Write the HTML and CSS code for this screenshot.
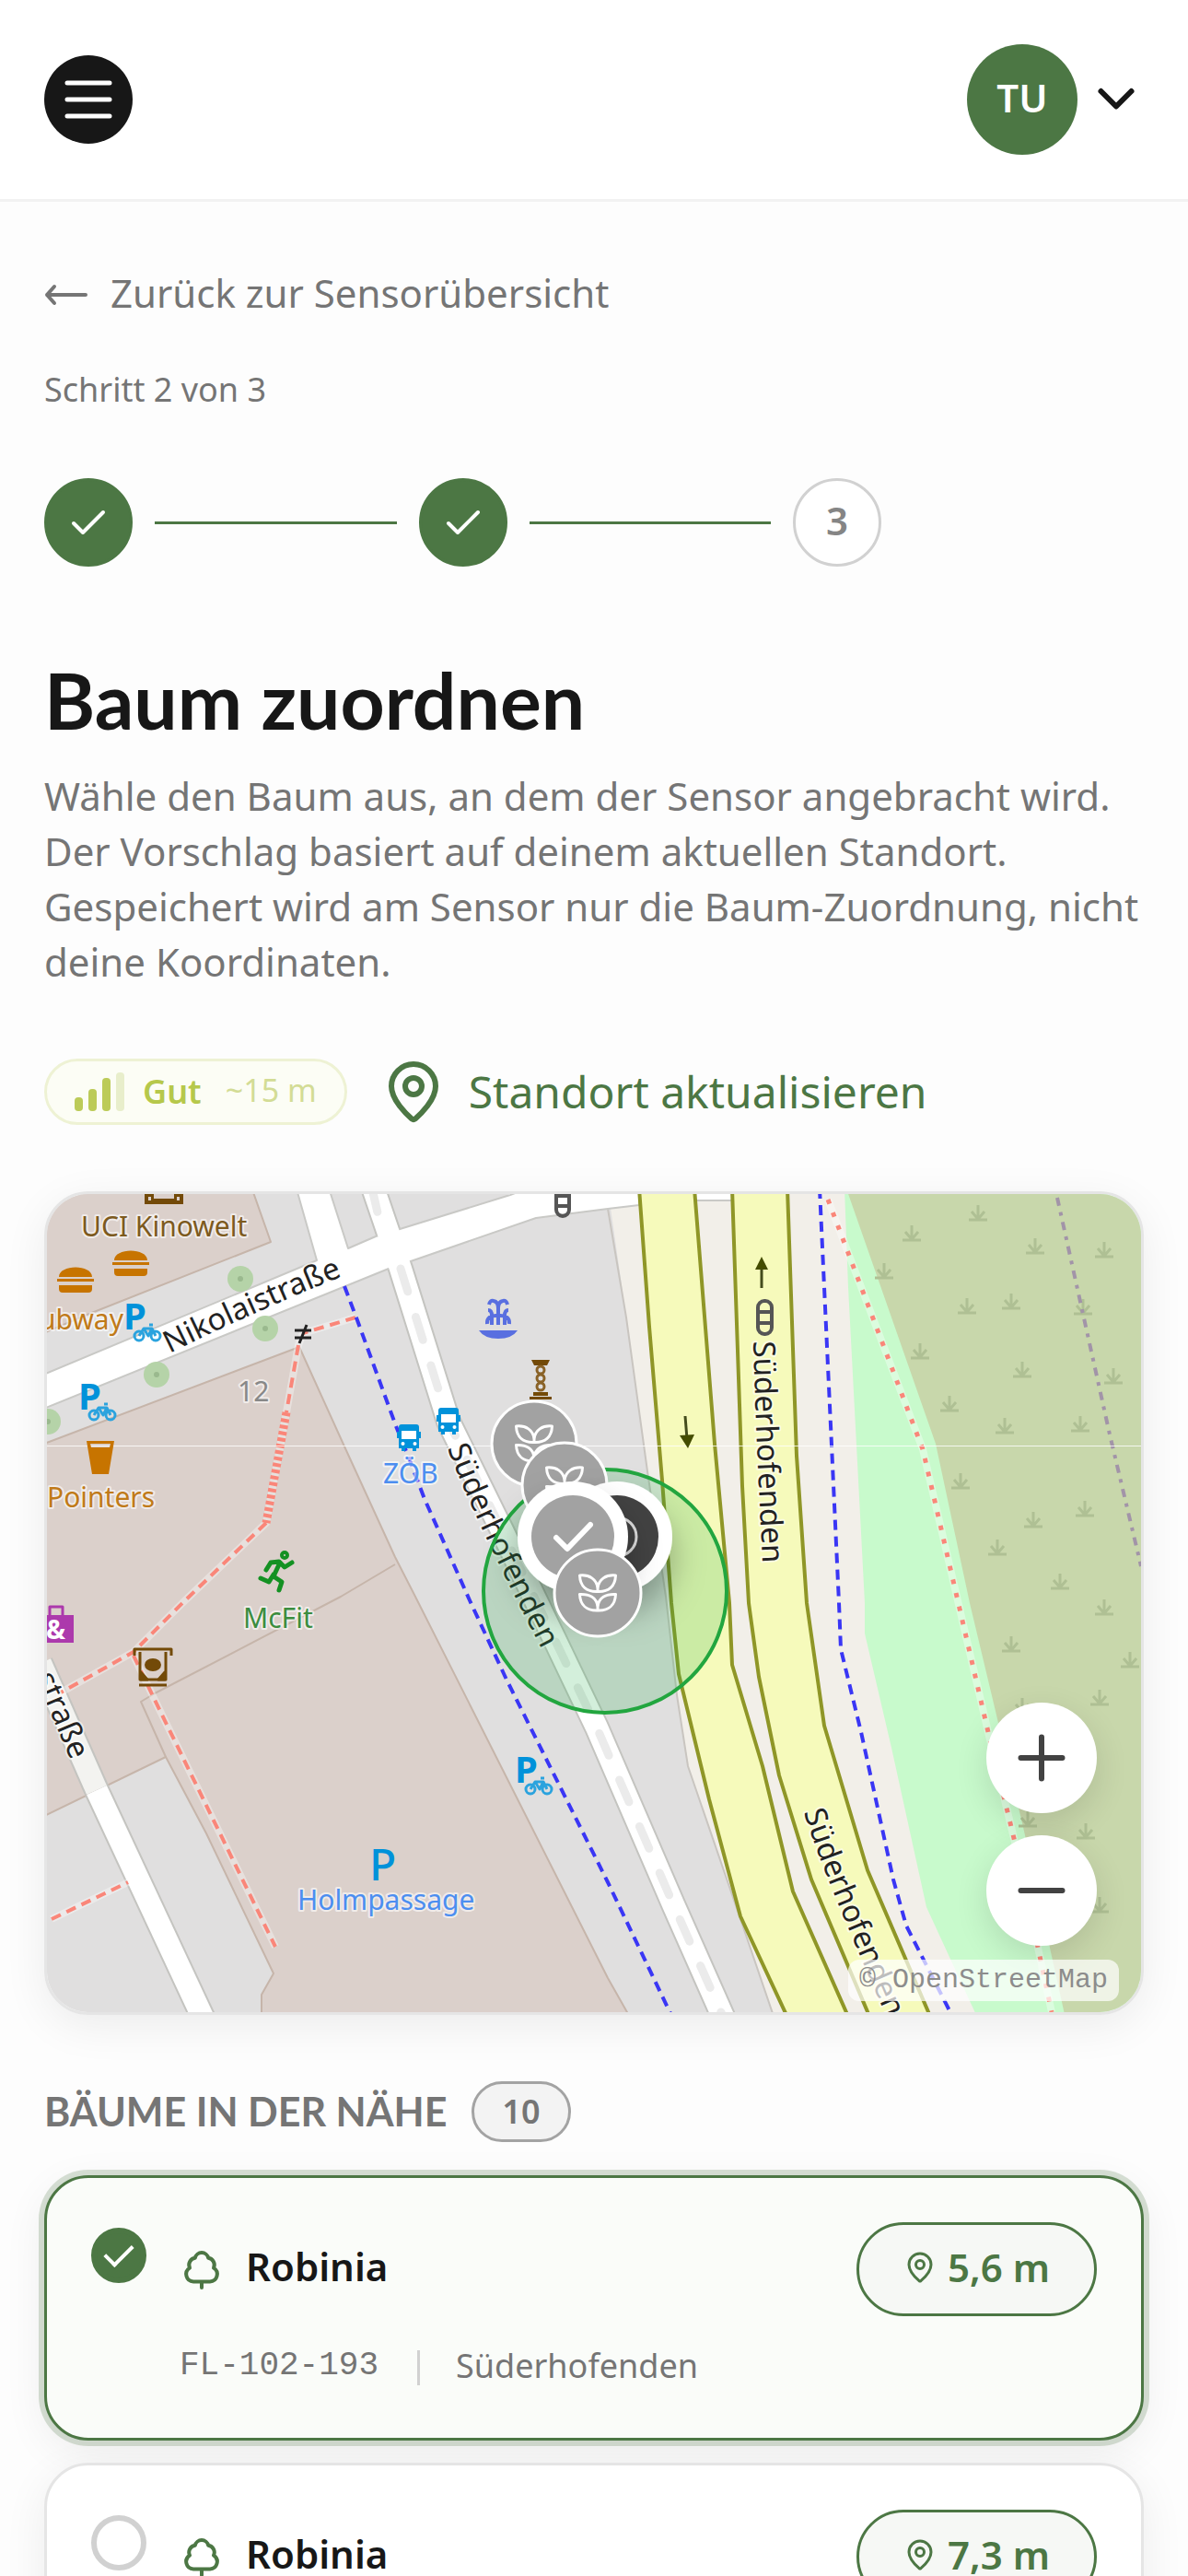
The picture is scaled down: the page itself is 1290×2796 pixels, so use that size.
FILE: index.html
```html
<!DOCTYPE html>
<html lang="de">
<head>
<meta charset="utf-8">
<meta name="viewport" content="width=device-width, initial-scale=1">
<title>Baum zuordnen</title>
<link rel="stylesheet" href="styles.css">
</head>
<body>
<svg class="defs" aria-hidden="true">
  <symbol id="pin" viewBox="0 0 24 24"><path d="M20 10c0 4.993-5.539 10.193-7.399 11.799a1 1 0 0 1-1.202 0C9.539 20.193 4 14.993 4 10a8 8 0 0 1 16 0z"/><circle cx="12" cy="10" r="3"/></symbol>
  <symbol id="check" viewBox="0 0 24 24"><path d="M4 12.500l5 5L20 6.500"/></symbol>
  <symbol id="tree" viewBox="0 0 24 24"><path d="M12 18.700v3.300M7.500 18.700a4 4 0 0 1-2-7.400 3.800 3.800 0 0 1 2.900-5.400 3.700 3.700 0 0 1 7.200 0 3.800 3.800 0 0 1 2.900 5.400 4 4 0 0 1-2 7.400z"/></symbol>
  <symbol id="leaf" viewBox="-21 -21 42 42"><path d="M0-1.500C-12-1-19-7-19.500-19-9-20-1-15 0-5 1-15 9-20 19.500-19 19-7 12-1 0-1.500zM0-5v4M0 19C-12 19.500-19 13-19.500 1.500-9 1-1 5 0 15 1 5 9 1 19.500 1.500 19 13 12 19.500 0 19zM0 14v5"/></symbol>
</svg>
<div class="app">
<header class="topbar">
  <button class="menu" type="button" aria-label="Menü">
    <svg viewBox="0 0 54 42"><path d="M4 3h46M4 21h46M4 39h46"/></svg>
  </button>
  <button class="account" type="button" aria-label="Konto">
    <span class="avatar">TU</span>
    <svg class="chevron" viewBox="2 2 20 20"><path d="M6.500 9l5.500 5.500L17.500 9"/></svg>
  </button>
</header>
<main class="content">
  <a class="back" href="#sensoren">
    <svg viewBox="0 0 48 48"><path d="M45 26H3M11 17L3 26l8 9"/></svg>
    <span>Zurück zur Sensorübersicht</span>
  </a>
  <p class="step-label">Schritt 2 von 3</p>
  <ol class="stepper">
    <li class="step done"><svg><use href="#check"/></svg></li>
    <li class="line" aria-hidden="true"></li>
    <li class="step done"><svg><use href="#check"/></svg></li>
    <li class="line" aria-hidden="true"></li>
    <li class="step">3</li>
  </ol>
  <h1>Baum zuordnen</h1>
  <p class="intro">Wähle den Baum aus, an dem der Sensor angebracht wird. Der Vorschlag basiert auf deinem aktuellen Standort. Gespeichert wird am Sensor nur die Baum-Zuordnung, nicht deine Koordinaten.</p>
  <div class="location">
    <div class="accuracy">
      <span class="bars"><i class="b1"></i><i class="b2"></i><i class="b3"></i><i class="b4"></i></span>
      <strong>Gut</strong>
      <span class="meters">~15 m</span>
    </div>
    <button class="refresh" type="button"><svg><use href="#pin"/></svg><span>Standort aktualisieren</span></button>
  </div>

  <section class="map" aria-label="Karte">
    <svg class="tiles" viewBox="51 1296 1188 888" preserveAspectRatio="xMidYMid slice">
      <defs>
        <g id="tuft"><path d="M-10 7H10M0 7V-9M-1 5L-7-2M1 5L7-2"/></g>
        <g id="bike"><circle cx="5" cy="13" r="5"/><circle cx="23" cy="13" r="5"/><path d="M5 13l5-8h9l4 8M10 5l5 8 4-8M16 1h4"/></g>
        <g id="burger"><path d="M-18-3c0-14 36-14 36 0zM-20-1h40v3h-40zM-18 6h36v4q0 4-4 4h-28q-4 0-4-4z"/></g>
        <g id="bus"><path d="M4 0h16q3 0 3 3v5h2v7h-2v11h-3v3h-4v-3H8v3H4v-3H1V15h-2V8h2V3q0-3 3-3z"/><path d="M4 7h16v9H4z" fill="#fff"/><circle cx="5.500" cy="21" r="2" fill="#fff"/><circle cx="18.500" cy="21" r="2" fill="#fff"/></g>
        <path id="p1" d="M184 1469Q290 1417 390 1378"/>
        <path id="p2" d="M818 1456Q821 1570 830 1730"/>
        <path id="p3" d="M486 1572Q517 1655 605 1822"/>
        <path id="p4" d="M873 1967C886 2010 910 2070 985 2240"/>
        <path id="p5" d="M16 1768L77 1911"/>
        <filter id="drop" x="-50%" y="-50%" width="200%" height="220%"><feDropShadow dx="0" dy="22" stdDeviation="18" flood-opacity=".3"/></filter>
      </defs>
      <rect x="0" y="1200" width="1400" height="1100" fill="#e0dfdf"/>
      <g class="building">
        <path d="M40 1280H270L294 1348 97 1426 40 1450z"/>
        <path d="M325 1462L374 1570 429 1690 451 1733 660 2147 690 2200H284V2165L297 2142 224 1990 180 1907 40 1975V1570z"/>
        <path class="open" d="M180 1907L153 1847 168 1838 370 1733 429 1698"/>
      </g>
      <path d="M660 1290L680 1430 703 1597 723 1733 735 1840 747 1917 802 2077 844 2200H1250V1290z" fill="#f2efe9"/>
      <path class="edge" d="M660 1312L680 1430 703 1597 723 1733 735 1840 747 1917 802 2077 844 2200"/>
      <path d="M917 1290L921 1397 939 1740 939 1773 968 1897 1006 2070 1066 2200H1250V1290z" fill="#c8facc"/>
      <path d="M919 1290L1016 1567 1053 1740 1111 1983 1159 2200H1260V1290z" fill="#c8d7ab"/>
      <g class="tufts">
        <use href="#tuft" x="1062" y="1317"/><use href="#tuft" x="990" y="1339"/><use href="#tuft" x="960" y="1380"/><use href="#tuft" x="1124" y="1353"/><use href="#tuft" x="1199" y="1357"/><use href="#tuft" x="1176" y="1419"/><use href="#tuft" x="1098" y="1413"/><use href="#tuft" x="1050" y="1418"/><use href="#tuft" x="999" y="1467"/><use href="#tuft" x="1110" y="1487"/><use href="#tuft" x="1209" y="1494"/><use href="#tuft" x="1031" y="1524"/><use href="#tuft" x="1091" y="1548"/><use href="#tuft" x="1173" y="1546"/><use href="#tuft" x="1043" y="1608"/><use href="#tuft" x="1178" y="1638"/><use href="#tuft" x="1122" y="1650"/><use href="#tuft" x="1083" y="1680"/><use href="#tuft" x="1151" y="1717"/><use href="#tuft" x="1199" y="1745"/><use href="#tuft" x="1098" y="1785"/><use href="#tuft" x="1227" y="1802"/><use href="#tuft" x="1194" y="1843"/><use href="#tuft" x="1110" y="1852"/><use href="#tuft" x="1116" y="1975"/><use href="#tuft" x="1179" y="1988"/><use href="#tuft" x="1194" y="2068"/>
      </g>
      <path class="lane-case" d="M44 1805L105 1943"/><path class="lane-pale" d="M44 1805L105 1943"/>
      <path class="lane-case" d="M105 1943L225 2200"/><path class="lane" d="M105 1943L225 2200"/>
      <path class="lane-case" d="M402 1280L435 1377 487 1543 546 1663 605 1785 648 1875 731 2067 790 2200"/>
      <path class="street" d="M40 1495L344 1368 319 1280H354L378 1355 408 1342 431 1335 554 1297 600 1280H800V1303H694V1308L660 1312 582 1322 443 1370 422 1377 40 1532z"/>
      <path class="lane" d="M402 1280L435 1377 487 1543 546 1663 605 1785 648 1875 731 2067 790 2200"/>
      <path class="lane-dash" d="M404 1290L412 1325M435 1377L487 1543 546 1663 605 1785 648 1875 731 2067 790 2200"/>
      <g class="primary">
        <path d="M694 1290L705 1440 719 1607 729 1740 737 1817 770 1953 804 2080 860 2200H926L861 2053 828 1917 795 1807 792 1740 776 1567 754 1290z"/>
        <path d="M795 1290L806 1613 813 1740 824 1820 846 1927 881 2040 949 2200H1015L942 2030 895 1873 876 1740 865 1580 855 1290z"/>
      </g>
      <g fill="#b5d3a8"><circle cx="261" cy="1388" r="14"/><circle cx="288" cy="1442" r="14"/><circle cx="170" cy="1492" r="14"/><circle cx="52" cy="1543" r="14"/></g>
      <g fill="#9ab98e"><circle cx="261" cy="1388" r="3"/><circle cx="288" cy="1442" r="3"/><circle cx="170" cy="1492" r="3"/><circle cx="52" cy="1543" r="3"/></g>
      <g class="halo-line"><path d="M386 1430L329 1447 324 1460 311 1533 289 1653 198 1740 145 1793 66 1837M145 1797L167 1843 299 2113M56 2083L139 2043M899 1302L1002 1573 1039 1733 1073 1880 1107 2020 1142 2184"/></g>
      <g class="foot"><path d="M386 1430L329 1447M324 1460L311 1533M289 1653L198 1740 145 1793 66 1837M145 1797L167 1843 299 2113M56 2083L139 2043"/><path class="steps" d="M311 1533L289 1653"/><path class="dots" d="M899 1302L1002 1573 1039 1733 1073 1880 1107 2020 1142 2184"/></g>
      <path class="cycle" d="M374 1396L388 1433 430 1548 443 1580 461 1627 510 1737 550 1823 640 2003 660 2043 735 2200"/>
      <path class="cycle" d="M890 1290L911 1740 913 1790 935 1880 970 2040 984 2090 1040 2200"/>
      <path class="border" d="M1148 1300L1205 1557 1239 1700"/>
      <path d="M40 1569.500H1250" stroke="#fff" stroke-opacity=".8" stroke-width="1"/>
      <g fill="none" stroke="#444c1c" stroke-width="3"><path d="M827 1398V1372M744 1537L746 1562"/></g>
      <path d="M820 1378l7-14 7 14zM738 1558l16-1-7 15z" fill="#444c00"/>
      <g fill="none" stroke="#555" stroke-width="4"><rect x="604" y="1285" width="14" height="35" rx="7"/><path d="M604 1298h14M604 1309h14"/><rect x="823" y="1412" width="15" height="36" rx="7"/><path d="M823 1424h15M823 1436h15"/></g>
      <path d="M320 1444h18M320 1452h18M333 1438l-8 20" stroke="#222" stroke-width="3"/>
      <g fill="#734a08"><path d="M157 1285h42v22h-42zM167 1288v13h22v-13z" fill-rule="evenodd"/><path d="M161 1299h3v4h-3zM192 1299h3v4h-3z" fill="#dbd0cb"/>
        <path d="M577 1476h20l-3 6h-14zM579 1511h16v4h-16zM575 1516h24v3h-24z"/></g>
      <g fill="none" stroke="#8a6328" stroke-width="3"><circle cx="587" cy="1487" r="4"/><circle cx="587" cy="1496" r="4"/><circle cx="587" cy="1505" r="4"/></g>
      <g fill="#c77400"><use href="#burger" x="142" y="1371"/><use href="#burger" x="82" y="1389"/><path fill-rule="evenodd" d="M94 1564h30l-6 36h-18zM98 1567l1 4h20l1-4z"/></g>
      <g fill="none" stroke="#596fe0" stroke-width="4"><path d="M541 1438v-18M534 1438v-10q0-6-4-6M548 1438v-10q0-6 4-6M529 1437q-1-10 12-9 13-1 12 9M531 1416q1-5 5-4 5 1 5 8 0-7 5-8 4-1 5 4"/><path d="M520 1444h42q-6 9-21 9t-21-9z" fill="#596fe0" stroke="none"/></g>
      <g fill="#0092da"><use href="#bus" x="475" y="1528"/><use href="#bus" x="432" y="1546"/></g>
      <g fill="none" stroke="#2ba3de" stroke-width="3"><use href="#bike" x="146" y="1437"/><use href="#bike" x="97" y="1523"/><use href="#bike" x="571" y="1929"/></g>
      <g fill="none" stroke="#149123" stroke-width="6" stroke-linecap="round" stroke-linejoin="round"><circle cx="309" cy="1688" r="2"/><path d="M304 1696l-7 15 9 6-3 9M297 1709l-5 8-9-4M289 1704l5-8 9-1 6 6 8-5" stroke-width="5"/></g>
      <g fill="#ac39ac"><path d="M30 1753h50v30H30z"/><path d="M54 1753v-9h14v9" fill="none" stroke="#ac39ac" stroke-width="3"/></g>
      <text x="50" y="1779" class="amp">&amp;</text>
      <g fill="none" stroke="#734a08" stroke-width="3"><path d="M146 1797v-7h40v7M152 1793v30h28v-30M151 1829h30"/><ellipse cx="166" cy="1807" rx="9" ry="7" fill="#734a08" stroke="none"/><path d="M153 1815l7 8h-7zM179 1815l-7 8h7z" fill="#734a08"/></g>

      <g class="poi">
        <text x="88" y="1342" fill="#7d5a1e">UCI Kinowelt</text>
        <text x="134" y="1443" text-anchor="end" fill="#c07a18">Subway</text>
        <text x="51" y="1636" fill="#c07a18">Pointers</text>
        <text x="416" y="1610" fill="#4c8ef0">ZÖB</text>
        <text x="264" y="1767" fill="#3b8d3f">McFit</text>
        <text x="323" y="2073" fill="#4c8ef0">Holmpassage</text>
        <text x="258" y="1521" fill="#888">12</text>
      </g>
      <g class="park"><text x="134" y="1443">P</text><text x="85" y="1530">P</text><text x="559" y="1935">P</text><text class="big" x="401" y="2041">P</text></g>
      <g class="road-name">
        <text><textPath href="#p1">Nikolaistraße</textPath></text>
        <text><textPath href="#p2">Süderhofenden</textPath></text>
        <text><textPath href="#p3">Süderhofenden</textPath></text>
        <text><textPath href="#p4">Süderhofenden</textPath></text>
        <text text-anchor="end"><textPath href="#p5" startOffset="100%">straße</textPath></text>
      </g>

      <circle cx="657" cy="1727" r="132" fill="#22b14c" fill-opacity=".2" stroke="#22a63f" stroke-width="4"/>
      <g class="leafpin"><circle cx="580" cy="1567" r="46"/><use href="#leaf" x="559" y="1546" width="42" height="42"/></g>
      <g class="leafpin"><circle cx="613" cy="1612" r="46"/><use href="#leaf" x="592" y="1591" width="42" height="42"/></g>
      <g filter="url(#drop)"><circle cx="670" cy="1668" r="60" fill="#fff"/><circle cx="670" cy="1668" r="45" fill="#424242"/></g>
      <circle cx="670" cy="1668" r="21" fill="none" stroke="#ddd" stroke-width="3"/>
      <g filter="url(#drop)"><circle cx="622" cy="1668" r="60" fill="#fff"/><circle cx="622" cy="1668" r="45" fill="#a2a2a2"/></g>
      <path d="M604 1669l12 12 25-26" fill="none" stroke="#fff" stroke-width="6" stroke-linecap="round"/>
      <g class="leafpin"><circle cx="649" cy="1729" r="47"/><use href="#leaf" x="628" y="1708" width="42" height="42"/></g>
    </svg>
    <div class="map-zoom">
      <button type="button" aria-label="Vergrößern"><svg viewBox="0 0 24 24"><path d="M4.500 12h15M12 4.500v15"/></svg></button>
      <button type="button" aria-label="Verkleinern"><svg viewBox="0 0 24 24"><path d="M4.500 12h15"/></svg></button>
    </div>
    <span class="attribution">© OpenStreetMap</span>
  </section>

  <section class="nearby">
    <div class="nearby-head"><h2>Bäume in der Nähe</h2><span class="count">10</span></div>
    <label class="card">
      <input type="radio" name="baum" checked>
      <span class="card-body">
        <span class="card-title"><svg class="tree"><use href="#tree"/></svg><span class="name">Robinia</span><span class="distance"><svg><use href="#pin"/></svg>5,6 m</span></span>
        <span class="card-meta"><span class="code">FL-102-193</span><span class="street-name">Süderhofenden</span></span>
      </span>
    </label>
    <label class="card">
      <input type="radio" name="baum">
      <span class="card-body">
        <span class="card-title"><svg class="tree"><use href="#tree"/></svg><span class="name">Robinia</span><span class="distance"><svg><use href="#pin"/></svg>7,3 m</span></span>
        <span class="card-meta"><span class="code">FL-102-194</span><span class="street-name">Süderhofenden</span></span>
      </span>
    </label>
  </section>
</main>
</div>
</body>
</html>
```
FILE: styles.css
```css
* { box-sizing: border-box; }
body {
  margin: 0;
  background: #fdfdfd;
  color: #171717;
  font-family: "Noto Sans", "Open Sans", sans-serif;
  font-size: 42px;
  line-height: 60px;
}
h1, h2, p, ol { margin: 0; padding: 0; }
button { padding: 0; border: 0; background: none; color: inherit; font: inherit; cursor: pointer; }
svg { display: block; flex: none; fill: none; stroke: currentColor; stroke-linecap: round; stroke-linejoin: round; }
.defs { position: absolute; width: 0; height: 0; }
.app { display: flex; flex-direction: column; height: 100vh; }

.topbar {
  display: flex;
  flex: none;
  justify-content: space-between;
  align-items: center;
  padding: 48px;
  border-bottom: 3px solid #f2f2f2;
  background: #fff;
}
.menu { display: grid; place-items: center; width: 96px; height: 96px; border-radius: 50%; background: #171717; color: #fff; }
.menu svg { width: 54px; height: 42px; stroke-width: 5; }
.account { display: flex; align-items: center; gap: 12px; }
.avatar { display: grid; place-items: center; width: 120px; height: 120px; padding-bottom: 4px; border-radius: 50%; background: #4c7744; color: #fff; font-weight: 600; }
.chevron { width: 60px; height: 60px; stroke-width: 2; }

.content { flex: 1; min-height: 0; padding: 69px 48px 48px; overflow-y: auto; scrollbar-width: none; }
.back { display: flex; align-items: center; gap: 24px; color: #757575; text-decoration: none; }
.back svg { width: 48px; height: 48px; stroke-width: 4; }
.step-label { margin-top: 51px; color: #757575; font-size: 36px; line-height: 48px; }
.stepper { display: flex; align-items: center; gap: 24px; max-width: 909px; margin-top: 72px; list-style: none; }
.step { display: grid; flex: none; place-items: center; width: 96px; height: 96px; padding-bottom: 4px; border: 3px solid #d1d1d1; border-radius: 50%; background: #fff; color: #858585; font-weight: 600; }
.step.done { padding: 0; border-color: #4c7744; background: #4c7744; color: #fff; }
.step svg { width: 48px; height: 48px; stroke-width: 2; }
.line { flex: 1; height: 3px; background: #4c7744; }
h1 { margin-top: 97px; font-family: Lato, sans-serif; font-size: 84px; line-height: 96px; font-weight: 700; }
.intro { margin-top: 26px; color: #757575; }

.location { display: flex; align-items: center; gap: 36px; margin-top: 75px; }
.accuracy { display: flex; align-items: center; gap: 20px; height: 72px; padding: 0 30px; border: 3px solid #eef2d4; border-radius: 36px; background: #fcfdf5; color: #b6c84b; font-size: 36px; }
.bars { display: flex; align-items: flex-end; gap: 6px; height: 42px; }
.bars i { width: 9px; border-radius: 4px; background: #bccb58; }
.bars .b1 { height: 15px; }
.bars .b2 { height: 24px; }
.bars .b3 { height: 36px; }
.bars .b4 { height: 42px; background: #e8eecb; }
.accuracy strong { font-weight: 600; }
.meters { margin-left: 6px; padding-bottom: 4px; color: #d3dc95; font-size: 34px; }
.refresh { display: flex; align-items: center; gap: 24px; height: 72px; color: #4c7744; font-size: 48px; }
.refresh svg { width: 72px; height: 72px; stroke-width: 2; }

.map { position: relative; height: 894px; margin-top: 72px; overflow: hidden; border: 3px solid #e5e5e5; border-radius: 48px; box-shadow: 0 12px 48px rgba(0, 0, 0, .07); }
.tiles { width: 100%; height: 100%; stroke: none; stroke-linecap: butt; }
.building path { fill: #dbd0cb; stroke: #c6b5aa; stroke-width: 2; }
.building .open { fill: none; }
.edge { fill: none; stroke: #c9c5c0; stroke-width: 2; }
.tufts { stroke: #afc094; stroke-width: 3px; fill: none; }
.lane-case, .lane, .lane-pale, .lane-dash { fill: none; }
.lane-case { stroke: #c4c4c0; stroke-width: 28px; }
.lane { stroke: #fff; stroke-width: 24px; }
.lane-pale { stroke: #f3f3f0; stroke-width: 24px; }
.lane-dash { stroke: #ebebeb; stroke-width: 9px; stroke-dasharray: 26 29; stroke-linecap: round; }
.street { fill: #fff; stroke: #c9c9c6; stroke-width: 2; }
.primary { fill: #f6fabb; stroke: #8f9627; stroke-width: 4; }
.foot, .halo-line { fill: none; }
.halo-line { stroke: #fff; stroke-opacity: .35; stroke-width: 8; }
.foot { stroke: #fa8679; stroke-width: 4; stroke-dasharray: 11 7; }
.steps { stroke-width: 9; stroke-dasharray: 4 3; }
.dots { stroke-width: 5; stroke-dasharray: 5 10; }
.cycle { fill: none; stroke: #3a36f5; stroke-width: 4; stroke-dasharray: 11 7; }
.border { fill: none; stroke: #a294a8; stroke-width: 4; stroke-dasharray: 9 7 4 7; }
.poi, .road-name { font-family: "Noto Sans", sans-serif; font-size: 30px; stroke: #fff; stroke-opacity: .6; stroke-width: 4px; paint-order: stroke; }
.road-name { fill: #222; font-size: 33px; }
.park { fill: #0092da; font-size: 40px; font-weight: 700; }
.park .big { font-size: 48px; font-weight: 500; }
.amp { fill: #fff; font-size: 28px; font-weight: 700; }
.leafpin circle { fill: #a2a2a2; stroke: #fff; stroke-width: 3; }
.leafpin use { stroke: #fff; stroke-width: 3; }
.map-zoom { position: absolute; right: 48px; bottom: 72px; display: grid; gap: 24px; }
.map-zoom button { display: grid; place-items: center; width: 120px; height: 120px; border-radius: 50%; background: #fff; color: #424242; box-shadow: 0 12px 36px rgba(0, 0, 0, .12); }
.map-zoom svg { width: 72px; height: 72px; stroke-width: 2; }
.attribution { position: absolute; right: 24px; bottom: 12px; padding: 0 12px; border-radius: 12px; background: rgba(255, 255, 255, .7); color: #8c8c8c; font: 30px/45px "Liberation Mono", monospace; }

.nearby { display: grid; gap: 24px; margin-top: 72px; }
.nearby-head { display: flex; align-items: center; gap: 27px; margin-bottom: 12px; color: #757575; }
h2 { font-family: Lato, sans-serif; font-size: 43px; line-height: 60px; font-weight: 700; text-transform: uppercase; }
.count { height: 66px; padding: 0 30px; border: 3px solid #a3a3a3; border-radius: 33px; background: #f3f3f3; font-size: 36px; line-height: 60px; font-weight: 600; }
.card { display: flex; gap: 36px; padding: 48px; border: 3px solid #e5e5e5; border-radius: 48px; background: #fff; box-shadow: 0 12px 48px rgba(0, 0, 0, .07); }
.card:has(:checked) { border-color: #4c7744; background: #fafcf9; box-shadow: 0 0 0 6px rgba(76, 119, 68, .22), 0 12px 48px rgba(0, 0, 0, .07); }
.card input { flex: none; width: 60px; height: 60px; margin: 6px 0 0; appearance: none; border: 6px solid #d1d1d1; border-radius: 50%; background: #fff; }
.card input:checked { display: grid; place-items: center; border-color: #4c7744; background: #4c7744; }
.card input:checked::before { content: ""; width: 26px; height: 13px; margin-bottom: 8px; border: solid #fff; border-width: 0 0 4px 4px; transform: rotate(-45deg); }
.card-body { display: grid; flex: 1; gap: 30px; padding-bottom: 6px; }
.card-title, .card-meta, .distance { display: flex; align-items: center; }
.card-title { gap: 24px; }
.tree { width: 48px; height: 48px; color: #4c7744; stroke-width: 2; }
.name { flex: 1; padding-bottom: 6px; font-weight: 600; }
.distance { gap: 12px; height: 102px; padding: 0 48px 4px; border: 3px solid #4c7744; border-radius: 51px; background: #f6f8f5; color: #4c7744; font-weight: 600; }
.distance svg { width: 36px; height: 36px; stroke-width: 2; }
.card-meta { gap: 42px; color: #757575; font-size: 36px; line-height: 48px; }
.code { font-family: "Liberation Mono", monospace; }
.street-name { position: relative; padding-left: 42px; }
.street-name::before { content: ""; position: absolute; left: 0; top: 7px; width: 3px; height: 38px; background: #d1d1d1; }
```
